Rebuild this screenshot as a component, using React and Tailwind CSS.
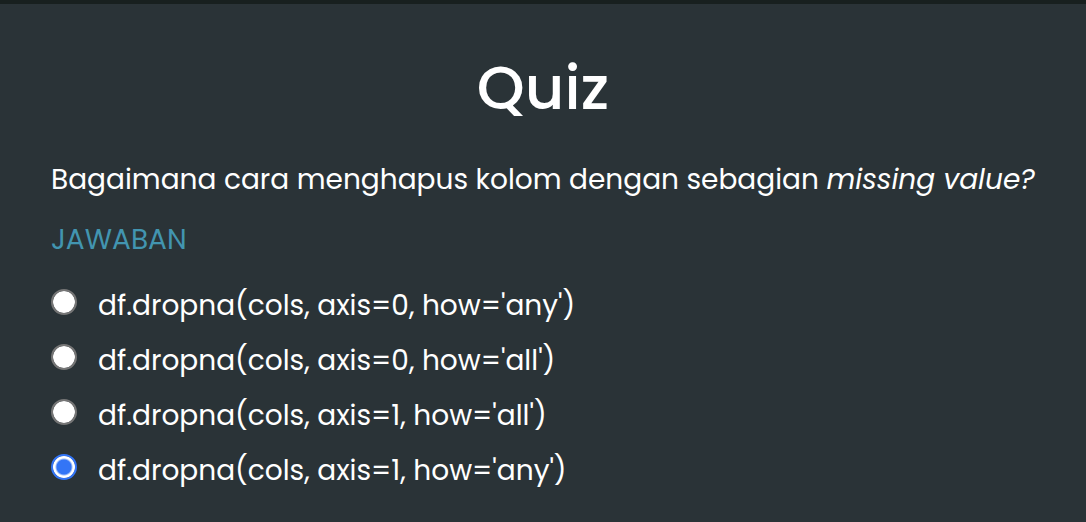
const options = [
  "df.dropna(cols, axis=0, how='any')",
  "df.dropna(cols, axis=0, how='all')",
  "df.dropna(cols, axis=1, how='all')",
  "df.dropna(cols, axis=1, how='any')",
];

export default function App() {
  return (
    <main className="min-h-screen border-t-4 border-[#18201f] bg-[#2a3337] px-[51px] pt-12 pb-4 font-['Poppins','Inter',sans-serif] text-white">
      <h1 className="text-center text-[61px] leading-[72px] font-medium">Quiz</h1>
      <p className="mt-9 text-[28px] leading-10">
        Bagaimana cara menghapus kolom dengan sebagian <em>missing value?</em>
      </p>
      <fieldset className="mt-5">
        <legend className="text-[28px] leading-10 text-[#4295b0]">JAWABAN</legend>
        <div className="flex flex-col gap-[15px] pt-[26px]">
          {options.map((option, i) => (
            <label key={option} className="flex items-center gap-[21px] text-[28px] leading-10">
              <input
                type="radio"
                name="answer"
                defaultChecked={i === 3}
                className="mb-2 size-[26px] shrink-0 appearance-none rounded-full border-2 border-[#767676] bg-white bg-clip-padding checked:border-[#3375f6] checked:bg-[radial-gradient(circle,#3375f6_7px,white_9px)]"
              />
              <span>{option}</span>
            </label>
          ))}
        </div>
      </fieldset>
    </main>
  );
}
